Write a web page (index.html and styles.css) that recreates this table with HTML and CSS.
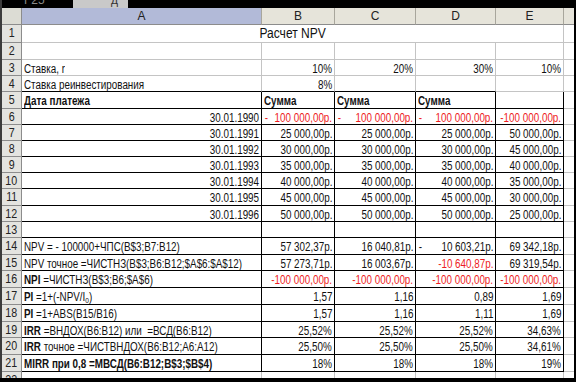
FILE: index.html
```html
<!DOCTYPE html>
<html lang="ru">
<head>
<meta charset="utf-8">
<title>Расчет NPV</title>
<link rel="stylesheet" href="styles.css">
</head>
<body>
<div class="sheet">
  <div class="topbar">
    <div class="namebox"><span class="peek">F25</span></div>
    <div class="fxbox"><span class="peek dark">д</span></div>
  </div>
  <div class="row head">
    <div class="corner"></div>
    <div class="ch sel">A</div><div class="ch">B</div><div class="ch">C</div><div class="ch">D</div><div class="ch">E</div><div class="ch last"></div>
  </div>
  <div class="row h1"><div class="rh"><span class="tx">1</span></div><div class="c merged title"><span class="tx">Расчет NPV</span></div><div class="c f"></div></div>
  <div class="row h2"><div class="rh"><span class="tx">2</span></div><div class="c"></div><div class="c"></div><div class="c"></div><div class="c"></div><div class="c"></div><div class="c f"></div></div>
  <div class="row hs"><div class="rh"><span class="tx">3</span></div><div class="c"><span class="tx">Ставка, r</span></div><div class="c r"><span class="tx">10%</span></div><div class="c r"><span class="tx">20%</span></div><div class="c r"><span class="tx">30%</span></div><div class="c r"><span class="tx">10%</span></div><div class="c f"></div></div>
  <div class="row hs"><div class="rh"><span class="tx">4</span></div><div class="c bb"><span class="tx">Ставка реинвестирования</span></div><div class="c r bb"><span class="tx">8%</span></div><div class="c bb"></div><div class="c bb"></div><div class="c"></div><div class="c f"></div></div>
  <div class="row hs tb"><div class="rh"><span class="tx">5</span></div><div class="c"><span class="tx"><b>Дата платежа</b></span></div><div class="c"><span class="tx"><b>Сумма</b></span></div><div class="c"><span class="tx"><b>Сумма</b></span></div><div class="c"><span class="tx"><b>Сумма</b></span></div><div class="c"></div><div class="c f"></div></div>
  <div class="row hs tb"><div class="rh"><span class="tx">6</span></div><div class="c r"><span class="tx">30.01.1990</span></div><div class="c acc red"><span class="tx dash">-</span><span class="num"><span class="tx">100 000,00р.</span></span></div><div class="c acc red"><span class="tx dash">-</span><span class="num"><span class="tx">100 000,00р.</span></span></div><div class="c acc red"><span class="tx dash">-</span><span class="num"><span class="tx">100 000,00р.</span></span></div><div class="c r red"><span class="tx">-100 000,00р.</span></div><div class="c f"></div></div>
  <div class="row hs tb"><div class="rh"><span class="tx">7</span></div><div class="c r"><span class="tx">30.01.1991</span></div><div class="c r"><span class="tx">25 000,00р.</span></div><div class="c r"><span class="tx">25 000,00р.</span></div><div class="c r"><span class="tx">25 000,00р.</span></div><div class="c r"><span class="tx">50 000,00р.</span></div><div class="c f"></div></div>
  <div class="row hs tb"><div class="rh"><span class="tx">8</span></div><div class="c r"><span class="tx">30.01.1992</span></div><div class="c r"><span class="tx">30 000,00р.</span></div><div class="c r"><span class="tx">30 000,00р.</span></div><div class="c r"><span class="tx">30 000,00р.</span></div><div class="c r"><span class="tx">45 000,00р.</span></div><div class="c f"></div></div>
  <div class="row hs tb"><div class="rh"><span class="tx">9</span></div><div class="c r"><span class="tx">30.01.1993</span></div><div class="c r"><span class="tx">35 000,00р.</span></div><div class="c r"><span class="tx">35 000,00р.</span></div><div class="c r"><span class="tx">35 000,00р.</span></div><div class="c r"><span class="tx">40 000,00р.</span></div><div class="c f"></div></div>
  <div class="row hs tb"><div class="rh"><span class="tx">10</span></div><div class="c r"><span class="tx">30.01.1994</span></div><div class="c r"><span class="tx">40 000,00р.</span></div><div class="c r"><span class="tx">40 000,00р.</span></div><div class="c r"><span class="tx">40 000,00р.</span></div><div class="c r"><span class="tx">35 000,00р.</span></div><div class="c f"></div></div>
  <div class="row hs tb"><div class="rh"><span class="tx">11</span></div><div class="c r"><span class="tx">30.01.1995</span></div><div class="c r"><span class="tx">45 000,00р.</span></div><div class="c r"><span class="tx">45 000,00р.</span></div><div class="c r"><span class="tx">45 000,00р.</span></div><div class="c r"><span class="tx">30 000,00р.</span></div><div class="c f"></div></div>
  <div class="row hs tb"><div class="rh"><span class="tx">12</span></div><div class="c r"><span class="tx">30.01.1996</span></div><div class="c r"><span class="tx">50 000,00р.</span></div><div class="c r"><span class="tx">50 000,00р.</span></div><div class="c r"><span class="tx">50 000,00р.</span></div><div class="c r"><span class="tx">25 000,00р.</span></div><div class="c f"></div></div>
  <div class="row hs tb"><div class="rh"><span class="tx">13</span></div><div class="c"></div><div class="c"></div><div class="c"></div><div class="c"></div><div class="c"></div><div class="c f"></div></div>
  <div class="row hl tb"><div class="rh"><span class="tx">14</span></div><div class="c"><span class="tx">NPV = - 100000+ЧПС(B$3;B7:B12)</span></div><div class="c r"><span class="tx">57 302,37р.</span></div><div class="c r"><span class="tx">16 040,81р.</span></div><div class="c acc"><span class="tx dash">-</span><span class="num"><span class="tx">10 603,21р.</span></span></div><div class="c r"><span class="tx">69 342,18р.</span></div><div class="c f"></div></div>
  <div class="row hl tb"><div class="rh"><span class="tx">15</span></div><div class="c"><span class="tx">NPV точное =ЧИСТНЗ(B$3;B6:B12;$A$6:$A$12)</span></div><div class="c r"><span class="tx">57 273,71р.</span></div><div class="c r"><span class="tx">16 003,67р.</span></div><div class="c r red"><span class="tx">-10 640,87р.</span></div><div class="c r"><span class="tx">69 319,54р.</span></div><div class="c f"></div></div>
  <div class="row hl tb"><div class="rh"><span class="tx">16</span></div><div class="c"><span class="tx"><b>NPI</b> =ЧИСТНЗ(B$3;B6;$A$6)</span></div><div class="c r red"><span class="tx">-100 000,00р.</span></div><div class="c r red"><span class="tx">-100 000,00р.</span></div><div class="c r red"><span class="tx">-100 000,00р.</span></div><div class="c r red"><span class="tx">-100 000,00р.</span></div><div class="c f"></div></div>
  <div class="row hl tb"><div class="rh"><span class="tx">17</span></div><div class="c"><span class="tx"><b>PI</b> =1+(-NPV/I<sub>0</sub>)</span></div><div class="c r"><span class="tx">1,57</span></div><div class="c r"><span class="tx">1,16</span></div><div class="c r"><span class="tx">0,89</span></div><div class="c r"><span class="tx">1,69</span></div><div class="c f"></div></div>
  <div class="row hl tb"><div class="rh"><span class="tx">18</span></div><div class="c"><span class="tx"><b>PI</b> =1+ABS(B15/B16)</span></div><div class="c r"><span class="tx">1,57</span></div><div class="c r"><span class="tx">1,16</span></div><div class="c r"><span class="tx">1,11</span></div><div class="c r"><span class="tx">1,69</span></div><div class="c f"></div></div>
  <div class="row hl tb"><div class="rh"><span class="tx">19</span></div><div class="c"><span class="tx"><b>IRR</b> =ВНДОХ(B6:B12) или&nbsp; =ВСД(B6:B12)</span></div><div class="c r"><span class="tx">25,52%</span></div><div class="c r"><span class="tx">25,52%</span></div><div class="c r"><span class="tx">25,52%</span></div><div class="c r"><span class="tx">34,63%</span></div><div class="c f"></div></div>
  <div class="row hl tb"><div class="rh"><span class="tx">20</span></div><div class="c"><span class="tx"><b>IRR</b> точное =ЧИСТВНДОХ(B6:B12;A6:A12)</span></div><div class="c r"><span class="tx">25,50%</span></div><div class="c r"><span class="tx">25,50%</span></div><div class="c r"><span class="tx">25,50%</span></div><div class="c r"><span class="tx">34,61%</span></div><div class="c f"></div></div>
  <div class="row hl tb"><div class="rh"><span class="tx">21</span></div><div class="c"><span class="tx"><b>MIRR при 0,8 =МВСД(B6:B12;B$3;$B$4)</b></span></div><div class="c r"><span class="tx">18%</span></div><div class="c r"><span class="tx">18%</span></div><div class="c r"><span class="tx">18%</span></div><div class="c r"><span class="tx">19%</span></div><div class="c f"></div></div>
  <div class="row last-row"><div class="rh"><span class="tx">22</span></div><div class="c"></div><div class="c"></div><div class="c"></div><div class="c"></div><div class="c"></div><div class="c f"></div></div>
</div>
</body>
</html>
```

FILE: styles.css
```css
html, body {
  margin: 0;
  padding: 0;
  background: #000;
}

.sheet {
  width: 572px;
  height: 378px;
  overflow: hidden;
  background: #fff;
  border-left: 2px solid #3c3c3c;
  display: flex;
  flex-direction: column;
  font-family: "Liberation Sans", Arial, sans-serif;
  font-size: 12px;
  color: #111;
}

.topbar {
  flex: none;
  height: 8px;
  background: #000;
  display: flex;
  overflow: hidden;
}

.namebox {
  width: 71px;
  overflow: hidden;
}

.fxbox {
  width: 55px;
  background: #c9c9c9;
  overflow: hidden;
}

.peek {
  display: block;
  line-height: 12px;
  margin-top: -6px;
  font-size: 12px;
  color: #8a8a8a;
  padding-left: 22px;
}

.peek.dark {
  color: #333;
  padding-left: 38px;
}

.row {
  flex: none;
  display: grid;
  grid-template-columns: 20px 240px 73px 81px 80px 68px 1fr;
  height: 16.5px;
}

.row.head {
  height: 17px;
}

.row.h1 {
  height: 18px;
}

.row.h2 {
  height: 17px;
}

.row.hs {
  height: 16.18px;
}

.row.hl {
  height: 16.75px;
}

.row.last-row {
  flex: 1;
}

.corner {
  background: #dcdcd4;
  border-right: 1px solid #8c8c8c;
  border-bottom: 1px solid #8c8c8c;
}

.ch {
  background: #e6e4da;
  border-right: 1px solid #a8a69c;
  border-bottom: 1px solid #8c8c8c;
  text-align: center;
  line-height: 16px;
  font-size: 12px;
  color: #222;
}

.ch.sel {
  background: #b2bad8;
}

.ch.last {
  border-right: none;
}

.rh {
  background: #e4e4e0;
  border-right: 1px solid #8c8c8c;
  border-bottom: 1px solid #8c8c8c;
  display: flex;
  justify-content: center;
  font-size: 13px;
  color: #222;
  overflow: hidden;
}

.c {
  border-right: 1px solid #c4c4c4;
  border-bottom: 1px solid #c4c4c4;
  padding: 1px 2px 0;
  display: flex;
  justify-content: flex-start;
  white-space: nowrap;
  overflow: hidden;
  min-width: 0;
}

.tx {
  display: inline-block;
  flex: none;
  line-height: 16px;
  transform: scaleX(0.82);
  transform-origin: left center;
}

.rh .tx {
  transform-origin: center;
}

.c.f {
  border-right: none;
}

.c.r {
  justify-content: flex-end;
}

.c.r .tx {
  transform-origin: right center;
}

.c.bb {
  border-bottom-color: #000;
}

.row.tb .c {
  border-color: #000;
}

.row.tb .c.f {
  border-bottom-color: #c4c4c4;
}

.c.merged {
  grid-column: 2 / 7;
}

.c.title {
  justify-content: center;
  font-size: 14px;
  padding-top: 0;
}

.c.title .tx {
  transform-origin: center;
  transform: scaleX(0.86);
}

.c.acc {
  justify-content: space-between;
}

.c.acc .num {
  display: flex;
  justify-content: flex-end;
}

.c.acc .num .tx {
  margin-left: -20px;
  transform-origin: right center;
}

.c.acc .tx.dash {
  transform-origin: left center;
  padding-left: 1px;
}

.red {
  color: #ee1c24;
}

sub {
  font-size: 8px;
  line-height: 0;
  vertical-align: -2px;
}

b {
  font-weight: bold;
}
```
